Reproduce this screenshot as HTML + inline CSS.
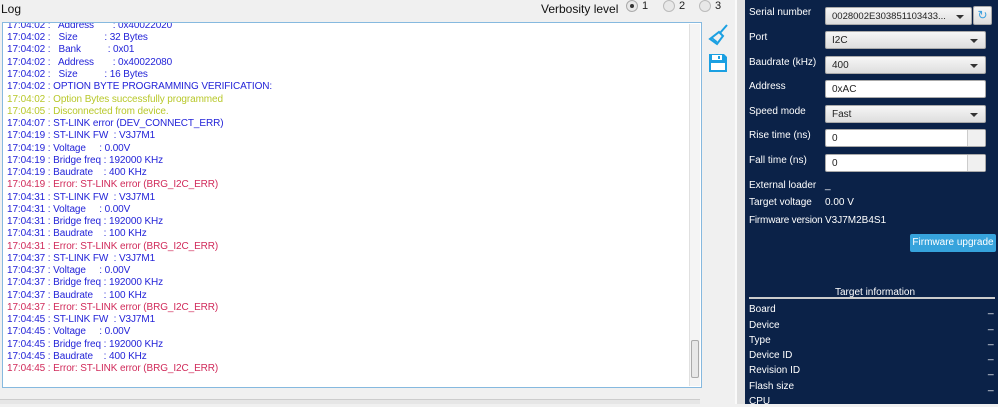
<!DOCTYPE html>
<html><head><meta charset="utf-8"><style>
*{margin:0;padding:0;box-sizing:border-box}
body{width:998px;height:404px;overflow:hidden;background:#f0f0f0;font-family:"Liberation Sans",sans-serif;position:relative}
.a{position:absolute;white-space:nowrap}
#log{position:absolute;left:2px;top:22px;width:700px;height:366px;background:#fff;border:1px solid #86b9df;overflow:hidden}
#log .t{position:absolute;left:4px;font-size:10px;color:#2323d8;white-space:pre;letter-spacing:-0.1px}
#log .y{color:#b8c82a}#log .r{color:#d02a5a}
.sb{position:absolute;right:1px;top:1px;width:11px;height:362px;background:#f4f4f4;border-left:1px solid #e0e0e0}
.rp{position:absolute;left:745px;top:0;width:253px;height:404px;background:#0b2248}
.l{position:absolute;left:749px;color:#fff;font-size:10px;white-space:nowrap}
.cb{position:absolute;left:825px;height:18px;border:1px solid #aaa;border-radius:2px;background:linear-gradient(#f6f6f6,#dedede);font-size:10px;color:#222;padding:3px 0 0 6px;white-space:nowrap}
.cb:after{content:"";position:absolute;right:7px;top:7px;border-left:4px solid transparent;border-right:4px solid transparent;border-top:4px solid #333}
.in{position:absolute;left:825px;height:18px;background:#fff;border:1px solid #aaa;border-radius:2px;font-size:10px;color:#222;padding:3px 0 0 6px}
.sp{position:absolute;right:0;top:0;width:18px;height:16px;border-left:1px solid #ccc;background:#f0f0f0}
.d{position:absolute;left:988px;color:#fff;font-size:10px}
</style></head><body>
<div class="a" style="left:1px;top:2px;font-size:12px;color:#111">Log</div>
<div class="a" style="left:541px;top:2px;font-size:12px;color:#111">Verbosity level</div>
<div class="a" style="left:626px;top:0px;width:12px;height:12px;border-radius:50%;border:1px solid #aaa;background:#e8e8e8"><div style="position:absolute;left:3px;top:3px;width:4px;height:4px;border-radius:50%;background:#333"></div></div>
<div class="a" style="left:642px;top:0px;font-size:11px;color:#222">1</div>
<div class="a" style="left:663px;top:0px;width:12px;height:12px;border-radius:50%;border:1px solid #bbb;background:#e8e8e8"></div>
<div class="a" style="left:679px;top:0px;font-size:11px;color:#222">2</div>
<div class="a" style="left:699px;top:0px;width:12px;height:12px;border-radius:50%;border:1px solid #bbb;background:#e8e8e8"></div>
<div class="a" style="left:715px;top:0px;font-size:11px;color:#222">3</div>
<div id="log">
<div class="t" style="top:-3px">17:04:02 :   Address       : 0x40022020</div>
<div class="t" style="top:9px">17:04:02 :   Size          : 32 Bytes</div>
<div class="t" style="top:21px">17:04:02 :   Bank          : 0x01</div>
<div class="t" style="top:34px">17:04:02 :   Address       : 0x40022080</div>
<div class="t" style="top:46px">17:04:02 :   Size          : 16 Bytes</div>
<div class="t" style="top:58px">17:04:02 : OPTION BYTE PROGRAMMING VERIFICATION:</div>
<div class="t y" style="top:71px">17:04:02 : Option Bytes successfully programmed</div>
<div class="t y" style="top:83px">17:04:05 : Disconnected from device.</div>
<div class="t" style="top:95px">17:04:07 : ST-LINK error (DEV_CONNECT_ERR)</div>
<div class="t" style="top:107px">17:04:19 : ST-LINK FW  : V3J7M1</div>
<div class="t" style="top:120px">17:04:19 : Voltage     : 0.00V</div>
<div class="t" style="top:132px">17:04:19 : Bridge freq : 192000 KHz</div>
<div class="t" style="top:144px">17:04:19 : Baudrate    : 400 KHz</div>
<div class="t r" style="top:156px">17:04:19 : Error: ST-LINK error (BRG_I2C_ERR)</div>
<div class="t" style="top:169px">17:04:31 : ST-LINK FW  : V3J7M1</div>
<div class="t" style="top:181px">17:04:31 : Voltage     : 0.00V</div>
<div class="t" style="top:193px">17:04:31 : Bridge freq : 192000 KHz</div>
<div class="t" style="top:205px">17:04:31 : Baudrate    : 100 KHz</div>
<div class="t r" style="top:218px">17:04:31 : Error: ST-LINK error (BRG_I2C_ERR)</div>
<div class="t" style="top:230px">17:04:37 : ST-LINK FW  : V3J7M1</div>
<div class="t" style="top:242px">17:04:37 : Voltage     : 0.00V</div>
<div class="t" style="top:254px">17:04:37 : Bridge freq : 192000 KHz</div>
<div class="t" style="top:267px">17:04:37 : Baudrate    : 100 KHz</div>
<div class="t r" style="top:279px">17:04:37 : Error: ST-LINK error (BRG_I2C_ERR)</div>
<div class="t" style="top:291px">17:04:45 : ST-LINK FW  : V3J7M1</div>
<div class="t" style="top:303px">17:04:45 : Voltage     : 0.00V</div>
<div class="t" style="top:316px">17:04:45 : Bridge freq : 192000 KHz</div>
<div class="t" style="top:328px">17:04:45 : Baudrate    : 400 KHz</div>
<div class="t r" style="top:340px">17:04:45 : Error: ST-LINK error (BRG_I2C_ERR)</div>
<div class="sb"><div style="position:absolute;left:1px;top:316px;width:8px;height:38px;border:1px solid #aaa;border-radius:2px;background:#e8e8e8"></div></div>
</div>
<svg class="a" style="left:708px;top:24px" width="22" height="22" viewBox="0 0 22 22"><path d="M19 1L12 9M11 8l4 4-6 8-7-5z" fill="none" stroke="#1ba0e2" stroke-width="2"/><path d="M4 14l5 4" stroke="#1ba0e2" stroke-width="1.5"/></svg>
<svg class="a" style="left:708px;top:53px" width="20" height="20" viewBox="0 0 20 20"><path d="M1 1h15l3 3v15H1z" fill="#1ba0e2"/><rect x="4" y="2" width="10" height="5" fill="#fff"/><rect x="10" y="3" width="2" height="3" fill="#1ba0e2"/><rect x="3" y="10" width="14" height="7" fill="#fff"/></svg>
<div class="a" style="left:735px;top:0;width:2px;height:404px;background:#fafafa"></div>
<div class="a" style="left:737px;top:0;width:8px;height:404px;background:#e0e0e0"></div>
<div class="a" style="left:0;top:399px;width:700px;height:5px;background:#e6e6e6;border-top:1px solid #ccc"></div>
<div class="rp"></div>
<div class="l" style="top:7px">Serial number</div>
<div class="cb" style="top:7px;width:147px;font-size:9.5px">0028002E303851103433...</div>
<div class="a" style="left:973px;top:6px;width:19px;height:19px;border:1px solid #aaa;border-radius:2px;background:linear-gradient(#f6f6f6,#dedede);color:#3aa0e0;font-size:12px;text-align:center;line-height:17px">↻</div>
<div class="l" style="top:32px">Port</div>
<div class="cb" style="top:31px;width:161px">I2C</div>
<div class="l" style="top:57px">Baudrate (kHz)</div>
<div class="cb" style="top:56px;width:161px">400</div>
<div class="l" style="top:81px">Address</div>
<div class="in" style="top:80px;width:161px">0xAC</div>
<div class="l" style="top:106px">Speed mode</div>
<div class="cb" style="top:105px;width:161px">Fast</div>
<div class="l" style="top:130px">Rise time (ns)</div>
<div class="in" style="top:129px;width:161px">0<div class="sp"></div></div>
<div class="l" style="top:155px">Fall time (ns)</div>
<div class="in" style="top:154px;width:161px">0<div class="sp"></div></div>
<div class="l" style="top:180px">External loader</div>
<div class="l" style="left:825px;top:180px">_</div>
<div class="l" style="top:197px">Target voltage</div>
<div class="l" style="left:825px;top:197px">0.00 V</div>
<div class="l" style="top:215px;letter-spacing:-0.2px">Firmware version</div>
<div class="l" style="left:825px;top:215px">V3J7M2B4S1</div>
<div class="a" style="left:910px;top:234px;width:86px;height:18px;background:#36a3dc;border-radius:2px;color:#fff;font-size:10px;text-align:center;line-height:18px">Firmware upgrade</div>
<div class="l" style="left:835px;top:287px">Target information</div>
<div class="a" style="left:749px;top:297px;width:246px;height:2px;background:#ccc"></div>
<div class="l" style="top:304px">Board</div><div class="d" style="top:304px">_</div>
<div class="l" style="top:320px">Device</div><div class="d" style="top:320px">_</div>
<div class="l" style="top:335px">Type</div><div class="d" style="top:335px">_</div>
<div class="l" style="top:350px">Device ID</div><div class="d" style="top:350px">_</div>
<div class="l" style="top:365px">Revision ID</div><div class="d" style="top:365px">_</div>
<div class="l" style="top:381px">Flash size</div><div class="d" style="top:381px">_</div>
<div class="l" style="top:396px">CPU</div>
</body></html>
